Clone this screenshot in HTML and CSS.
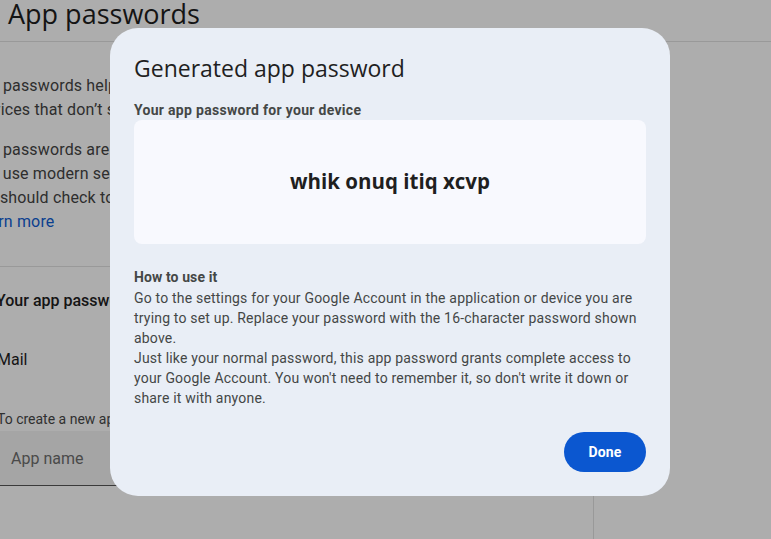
FILE: index.html
```html
<!DOCTYPE html>
<html>
<head>
<meta charset="utf-8">
<link rel="stylesheet" href="styles.css">
</head>
<body>
<div class="page">
  <header class="top">
    <h1 class="title">App passwords</h1>
  </header>
  <div class="body">
    <main class="main">
      <section class="intro">
        <p class="para">App passwords help you sign in to your Google Account on older apps and<br>services that don’t support modern security standards.</p>
        <p class="para">App passwords are less secure than using up-to-date apps and services<br>that use modern security standards. Before you create an app password,<br>you should check to see if your app needs this in order to sign in.</p>
        <a class="link">Learn more</a>
      </section>
      <section class="list">
        <h2 class="list-title">Your app passwords</h2>
        <div class="item">Mail</div>
        <p class="hint">To create a new app specific password, type a name for it below...</p>
        <div class="field">App name</div>
      </section>
    </main>
    <aside class="side"></aside>
  </div>
</div>

<div class="dialog">
  <h2 class="dlg-title">Generated app password</h2>
  <div class="label">Your app password for your device</div>
  <div class="pwbox"><span class="pw">whik onuq itiq xcvp</span></div>
  <div class="howto">
    <div class="howto-title">How to use it</div>
    <p class="howto-text">Go to the settings for your Google Account in the application or device you are trying to set up. Replace your password with the 16-character password shown above.</p>
    <p class="howto-text">Just like your normal password, this app password grants complete access to your Google Account. You won't need to remember it, so don't write it down or share it with anyone.</p>
  </div>
  <div class="actions">
    <button class="done">Done</button>
  </div>
</div>
</body>
</html>
```

FILE: styles.css
```css
html, body {
  margin: 0;
  padding: 0;
}
body {
  width: 771px;
  height: 539px;
  overflow: hidden;
  background: #adadad;
  font-family: Roboto, "Noto Sans", Arial, sans-serif;
  position: relative;
}
.page {
  color: #141414;
}
.top {
  height: 41px;
  border-bottom: 1px solid #999999;
  padding-left: 8px;
  display: flex;
  align-items: flex-end;
  overflow: hidden;
}
.title {
  margin: 0;
  font-family: "Open Sans", Roboto, sans-serif;
  font-weight: 400;
  font-size: 27px;
  line-height: 30px;
  position: relative;
  top: -12px;
  color: #141414;
}
.body {
  display: flex;
  height: 497px;
}
.main {
  width: 640px;
  border-right: 1px solid #999999;
  margin-left: -47px;
  overflow: hidden;
  flex: none;
}
.intro {
  padding: 32px 0 32px 17px;
  border-bottom: 1px solid #999999;
  font-size: 16px;
  line-height: 24px;
  letter-spacing: 0.15px;
  color: #2e2e2e;
  white-space: nowrap;
}
.para {
  margin: 0 0 16px;
}
.para:last-of-type {
  margin-bottom: 0;
}
.link {
  color: #0b3f8f;
  display: block;
  margin-left: 2px;
}
.list {
  padding-left: 45px;
}
.list-title {
  margin: 22px 0 0 -2px;
  font-size: 16px;
  font-weight: 500;
  line-height: 24px;
  color: #141414;
  white-space: nowrap;
}
.item {
  margin-top: 35px;
  margin-left: -1px;
  font-size: 16px;
  line-height: 24px;
  color: #141414;
}
.hint {
  margin: 37px 0 0 -1px;
  font-size: 14px;
  line-height: 20px;
  white-space: nowrap;
  color: #303030;
}
.field {
  margin-top: 2px;
  margin-left: -45px;
  width: 200px;
  height: 55px;
  background: #a5a5a5;
  border-bottom: 1px solid #3a3a3a;
  box-sizing: border-box;
  padding-left: 58px;
  display: flex;
  align-items: center;
  font-size: 16px;
  color: #4a4a4a;
}
.side {
  flex: 1;
}

.dialog {
  position: absolute;
  left: 110px;
  top: 28px;
  width: 560px;
  height: 468px;
  box-sizing: border-box;
  background: #e9eef6;
  border-radius: 28px;
  padding: 24px 24px 24px;
  display: flex;
  flex-direction: column;
  color: #444746;
}
.dlg-title {
  margin: 0;
  font-family: "Open Sans", Roboto, sans-serif;
  font-weight: 400;
  font-size: 23px;
  line-height: 32px;
  color: #1f1f1f;
}
.label {
  margin-top: 16px;
  font-size: 14px;
  line-height: 20px;
  font-weight: 700;
  letter-spacing: 0.3px;
  color: #444746;
}
.pwbox {
  margin-top: 0;
  height: 124px;
  background: #f8f9fe;
  border-radius: 8px;
  display: flex;
  align-items: center;
  justify-content: center;
}
.pw {
  font-family: "Open Sans", Roboto, sans-serif;
  font-size: 20.5px;
  font-weight: 700;
  color: #1f1f1f;
  position: relative;
  top: -1px;
}
.howto {
  margin-top: 24px;
  font-size: 14px;
  line-height: 20px;
  letter-spacing: 0.19px;
}
.howto-title {
  font-weight: 700;
  letter-spacing: 0.1px;
  margin-top: -1px;
  margin-bottom: 1px;
}
.howto-text {
  margin: 0;
}
.actions {
  margin-top: auto;
  display: flex;
  justify-content: flex-end;
}
.done {
  width: 82px;
  height: 40px;
  border: none;
  border-radius: 20px;
  background: #0b57d0;
  color: #ffffff;
  font-family: Roboto, sans-serif;
  font-size: 14px;
  font-weight: 700;
  letter-spacing: 0.2px;
  padding: 0;
}
```
